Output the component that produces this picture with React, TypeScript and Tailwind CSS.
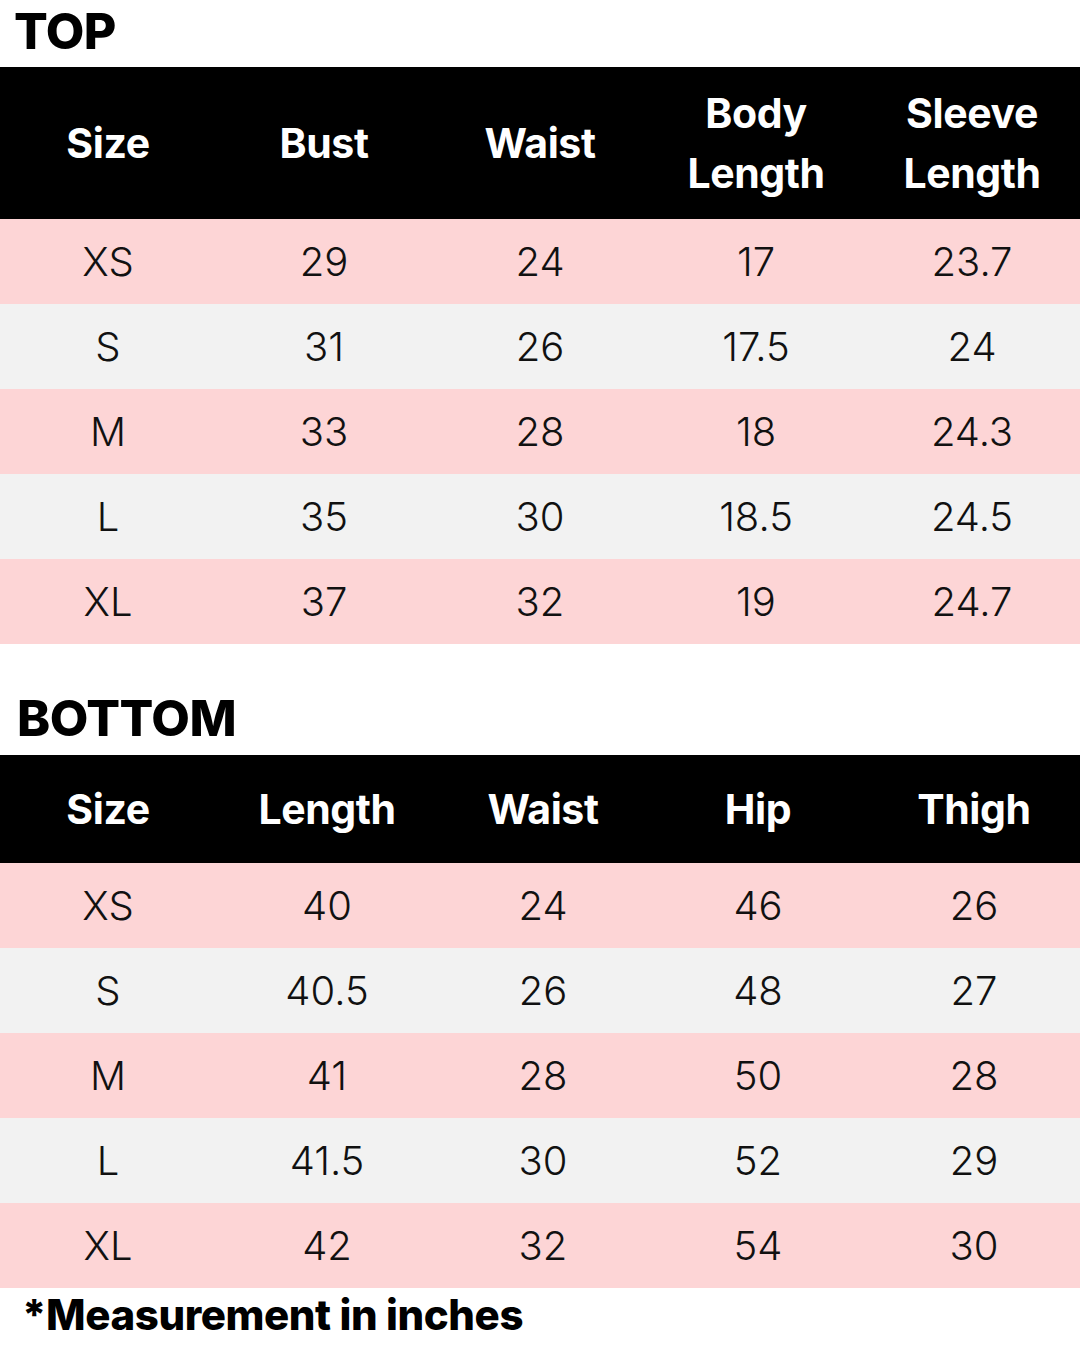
const top = {
  head: ['Size', 'Bust', 'Waist', 'Body Length', 'Sleeve Length'],
  rows: [
    ['XS', '29', '24', '17', '23.7'],
    ['S', '31', '26', '17.5', '24'],
    ['M', '33', '28', '18', '24.3'],
    ['L', '35', '30', '18.5', '24.5'],
    ['XL', '37', '32', '19', '24.7'],
  ],
}

const bottom = {
  head: ['Size', 'Length', 'Waist', 'Hip', 'Thigh'],
  rows: [
    ['XS', '40', '24', '46', '26'],
    ['S', '40.5', '26', '48', '27'],
    ['M', '41', '28', '50', '28'],
    ['L', '41.5', '30', '52', '29'],
    ['XL', '42', '32', '54', '30'],
  ],
}

function Table({
  data,
  cols,
  headH,
}: {
  data: { head: string[]; rows: string[][] }
  cols: string
  headH: string
}) {
  return (
    <div className="flex flex-col">
      <div className={`grid ${cols} ${headH} bg-black text-white`}>
        {data.head.map(h => (
          <div
            key={h}
            className="flex items-center justify-center text-center text-[41px] font-bold leading-[60px] tracking-[-0.01em] px-6"
          >
            {h}
          </div>
        ))}
      </div>
      {data.rows.map((r, i) => (
        <div
          key={i}
          className={`grid ${cols} h-[85px] ${i % 2 === 0 ? 'bg-[#fdd5d6]' : 'bg-[#f2f2f2]'}`}
        >
          {r.map((c, j) => (
            <div key={j} className="flex items-center justify-center text-[40px] font-light text-[#111]">
              {c}
            </div>
          ))}
        </div>
      ))}
    </div>
  )
}

export default function App() {
  return (
    <div className="w-[1080px] h-[1350px] bg-white flex flex-col" style={{ fontFamily: 'Inter, "Noto Sans", sans-serif' }}>
      {/* Top */}
      <div className="h-[67px] flex items-center pl-[14px] pb-[6px]">
        <h2 className="text-[50px] font-extrabold leading-none tracking-[-0.01em] text-black">TOP</h2>
      </div>
      <Table data={top} cols="grid-cols-[216px_216px_216px_216px_216px]" headH="h-[152px]" />

      {/* Bottom */}
      <div className="h-[111px] flex items-end pl-[17px] pb-[12px]">
        <h2 className="text-[50px] font-extrabold leading-none tracking-[-0.01em] text-black">BOTTOM</h2>
      </div>
      <Table data={bottom} cols="grid-cols-[216px_222px_210px_220px_212px]" headH="h-[108px]" />

      <div className="pl-[22px] pt-[2px]">
        <p className="text-[42px] font-extrabold leading-[50px] tracking-[-0.01em] text-black">*Measurement in inches</p>
      </div>
    </div>
  )
}
